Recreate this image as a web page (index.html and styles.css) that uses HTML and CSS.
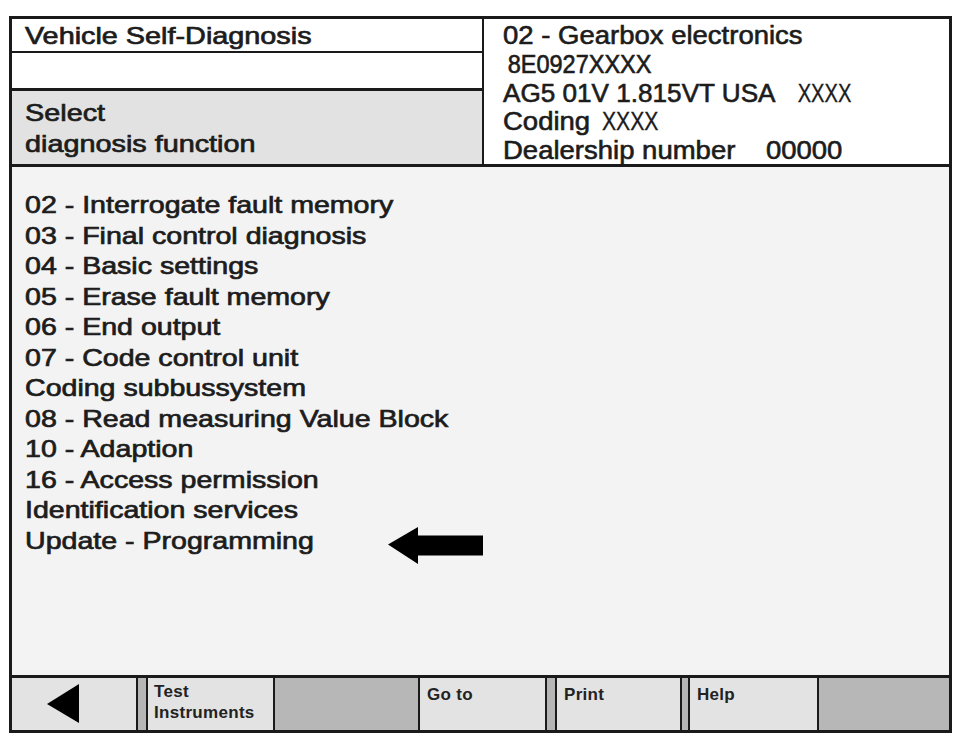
FILE: index.html
```html
<!DOCTYPE html>
<html>
<head>
<meta charset="utf-8">
<title>Vehicle Self-Diagnosis</title>
<link rel="stylesheet" href="styles.css">
</head>
<body>
<div class="screen">
  <header class="head">
    <div class="head-left">
      <div class="title"><span class="wide">Vehicle Self-Diagnosis</span></div>
      <div class="blank"></div>
      <div class="select"><span class="wide">Select<br>diagnosis function</span></div>
    </div>
    <div class="info">
      <div class="line">02 - Gearbox electronics</div>
      <div class="line part">8E0927XXXX</div>
      <div class="line tight">AG5 01V 1.815VT USA&nbsp;&nbsp;&nbsp;<span class="x">XXXX</span></div>
      <div class="line">Coding <span class="x x-gap">XXXX</span></div>
      <div class="line">Dealership number&nbsp;&nbsp;&nbsp;&nbsp;00000</div>
    </div>
  </header>
  <main class="main">
    <ul class="menu">
      <li><span>02 - Interrogate fault memory</span></li>
      <li><span>03 - Final control diagnosis</span></li>
      <li><span>04 - Basic settings</span></li>
      <li><span>05 - Erase fault memory</span></li>
      <li><span>06 - End output</span></li>
      <li><span>07 - Code control unit</span></li>
      <li><span>Coding subbussystem</span></li>
      <li><span>08 - Read measuring Value Block</span></li>
      <li><span>10 - Adaption</span></li>
      <li><span>16 - Access permission</span></li>
      <li><span>Identification services</span></li>
      <li><span>Update - Programming</span><svg class="pointer" viewBox="0 0 96 37" aria-hidden="true"><polygon points="0,17.5 30,0 30,8.5 95,8.5 95,28.5 30,28.5 30,37" fill="#000"/></svg></li>
    </ul>
  </main>
  <footer class="bar">
    <div class="key back"><svg class="back-icon" viewBox="0 0 32 40" aria-hidden="true"><polygon points="0,20 32,0 32,39" fill="#000"/></svg></div>
    <div class="gap"></div>
    <div class="key test">Test<br>Instruments</div>
    <div class="key off"></div>
    <div class="key goto">Go to</div>
    <div class="gap"></div>
    <div class="key print">Print</div>
    <div class="gap slim"></div>
    <div class="key help">Help</div>
    <div class="key off rest"></div>
  </footer>
</div>
</body>
</html>
```
FILE: styles.css
```css
body {
  margin: 0;
  background: #ffffff;
  font-family: "Liberation Sans", Arial, Helvetica, sans-serif;
  color: #1c1c1c;
}

.screen {
  box-sizing: border-box;
  width: 943px;
  margin: 16px 0 0 9px;
  border: 3px solid #1a1a1a;
  background: #ffffff;
}

/* ---------- header ---------- */
.head {
  display: grid;
  grid-template-columns: 472px 1fr;
  grid-template-rows: 145px;
  height: 145px;
  border-bottom: 3px solid #1a1a1a;
}

.head-left {
  display: flex;
  flex-direction: column;
  border-right: 2px solid #1a1a1a;
}

.title {
  height: 32px;
  border-bottom: 2px solid #1a1a1a;
  padding-left: 13px;
  font-size: 24px;
  line-height: 33px;
  -webkit-text-stroke: 0.7px currentColor;
}

.blank {
  height: 35px;
  border-bottom: 3px solid #1a1a1a;
}

.select {
  flex: 1;
  background: #e2e2e2;
  padding: 6px 0 0 13px;
  font-size: 24px;
  line-height: 31px;
  -webkit-text-stroke: 0.7px currentColor;
}

.wide {
  display: inline-block;
  transform: scaleX(1.2);
  transform-origin: 0 0;
}

.info {
  min-height: 0;
  padding: 2px 0 0 19px;
  font-size: 25px;
  line-height: 28.75px;
  white-space: nowrap;
  -webkit-text-stroke: 0.6px currentColor;
}

.line {
  transform: scaleX(1.1);
  transform-origin: 0 0;
}

.line.tight {
  transform: scaleX(1.045);
}

.line.part {
  transform: scaleX(0.94);
  padding-left: 5px;
}

.x {
  display: inline-block;
  transform: scaleX(0.77);
  transform-origin: 0 0;
  -webkit-text-stroke: 0.3px currentColor;
}

.x-gap {
  margin-left: 4px;
}

/* ---------- main list ---------- */
.main {
  box-sizing: border-box;
  height: 508px;
  padding: 23px 0 0 13px;
  background: #f3f3f3;
}

.menu {
  list-style: none;
  margin: 0;
  padding: 0;
  font-size: 24px;
  line-height: 30.5px;
  white-space: nowrap;
  -webkit-text-stroke: 0.7px currentColor;
}

.menu span {
  display: inline-block;
  transform: scaleX(1.19);
  transform-origin: 0 0;
}

.pointer {
  width: 96px;
  height: 37px;
  margin-left: 120px;
  vertical-align: -15px;
}

/* ---------- function keys ---------- */
.bar {
  display: flex;
  height: 52px;
  border-top: 3px solid #1a1a1a;
}

.key {
  box-sizing: border-box;
  background: #e3e3e3;
  font-size: 17px;
  font-weight: bold;
  line-height: 20.7px;
  letter-spacing: 0.3px;
  padding: 7px 0 0 7px;
  color: #222;
}

.back {
  width: 124px;
  padding: 0 0 0 35px;
  display: flex;
  align-items: center;
}

.back-icon {
  width: 32px;
  height: 40px;
  display: block;
}

.gap {
  box-sizing: border-box;
  width: 12px;
  border-left: 2px solid #1a1a1a;
  border-right: 2px solid #1a1a1a;
  background: #b5b5b5;
}

.gap.slim {
  width: 10px;
}

.test {
  width: 127px;
  border-right: 2px solid #1a1a1a;
  padding: 4px 0 0 6px;
}

.off {
  width: 145px;
  background: #b7b7b7;
  border-right: 2px solid #1a1a1a;
}

.goto {
  width: 125px;
}

.print {
  width: 123px;
}

.help {
  width: 129px;
  border-right: 2px solid #1a1a1a;
}

.rest {
  flex: 1;
  width: auto;
  border-right: none;
}
```
